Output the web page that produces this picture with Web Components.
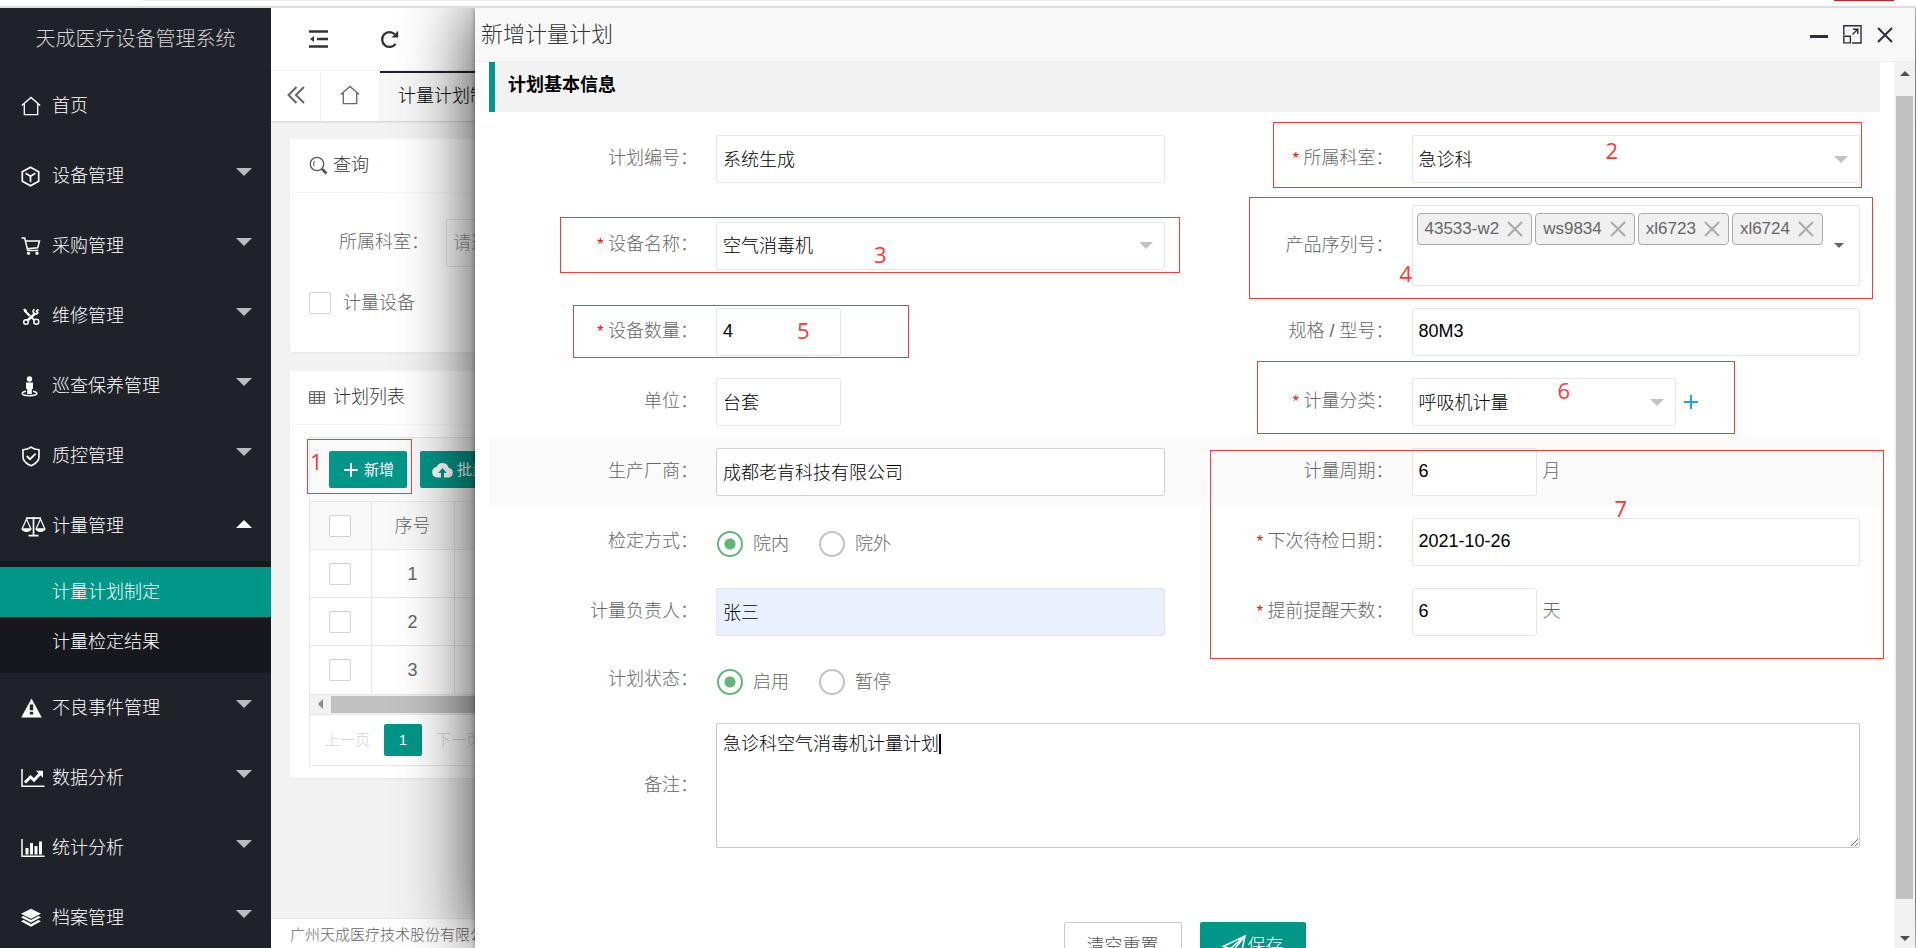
<!DOCTYPE html>
<html lang="zh-CN">
<head>
<meta charset="utf-8">
<title>天成医疗设备管理系统</title>
<style>
  html, body { margin: 0; height: 100%; overflow: hidden; }
  body { font: 300 18px/24px "Liberation Sans", "Noto Sans CJK SC", sans-serif; color: #333; background: #fff; }
</style>
</head>
<body>
<app-shell>
  <side-nav slot="side">
    <nav-item icon="home" label="首页"></nav-item>
    <nav-item icon="cube" label="设备管理" group></nav-item>
    <nav-item icon="cart" label="采购管理" group></nav-item>
    <nav-item icon="tools" label="维修管理" group></nav-item>
    <nav-item icon="patrol" label="巡查保养管理" group></nav-item>
    <nav-item icon="shield" label="质控管理" group></nav-item>
    <nav-item icon="scale" label="计量管理" group open>
      <nav-link label="计量计划制定" active></nav-link>
      <nav-link label="计量检定结果"></nav-link>
    </nav-item>
    <nav-item icon="warn" label="不良事件管理" group></nav-item>
    <nav-item icon="trend" label="数据分析" group></nav-item>
    <nav-item icon="bars" label="统计分析" group></nav-item>
    <nav-item icon="layers" label="档案管理" group></nav-item>
  </side-nav>
  <top-bar slot="main"></top-bar>
  <tab-bar slot="main"></tab-bar>
  <page-content slot="main">
    <ui-card icon="search" heading="查询"><query-form></query-form></ui-card>
    <ui-card icon="grid" heading="计划列表"><plan-list></plan-list></ui-card>
  </page-content>
  <page-footer slot="main"></page-footer>
  <ui-dialog slot="dialog" heading="新增计量计划">
    <section-title>计划基本信息</section-title>
    <form-row>
      <text-field label="计划编号" value="系统生成"></text-field>
      <select-field label="所属科室" value="急诊科" required>
        <step-note style="left:88px;right:18px;top:-2px;bottom:6px;--nx:332px;--ny:16px">2</step-note>
      </select-field>
    </form-row>
    <form-row>
      <select-field label="设备名称" value="空气消毒机" required>
        <step-note style="left:71px;right:5px;top:23px;bottom:24px;--nx:313px;--ny:25px">3</step-note>
      </select-field>
      <tag-field label="产品序列号" tags="43533-w2,ws9834,xl6723,xl6724">
        <step-note style="left:64px;right:7px;top:3px;bottom:-2px;--nx:150px;--ny:64px">4</step-note>
      </tag-field>
    </form-row>
    <form-row>
      <text-field label="设备数量" value="4" size="short" required>
        <step-note style="left:84px;width:336px;top:8px;bottom:9px;--nx:223px;--ny:13px">5</step-note>
      </text-field>
      <text-field label="规格 / 型号" value="80M3"></text-field>
    </form-row>
    <form-row>
      <text-field label="单位" value="台套" size="short"></text-field>
      <select-field label="计量分类" value="呼吸机计量" size="medium" add required>
        <step-note style="left:72px;width:478px;top:-6px;bottom:3px;--nx:300px;--ny:17px">6</step-note>
      </select-field>
    </form-row>
    <form-row hover>
      <text-field label="生产厂商" value="成都老肯科技有限公司" strong></text-field>
      <text-field label="计量周期" value="6" size="short" unit="月">
        <step-note style="left:25px;right:-4px;top:13px;height:209px;--nx:404px;--ny:46px">7</step-note>
      </text-field>
    </form-row>
    <form-row>
      <radio-field label="检定方式" options="院内,院外"></radio-field>
      <text-field label="下次待检日期" value="2021-10-26" required></text-field>
    </form-row>
    <form-row>
      <text-field label="计量负责人" value="张三" filled></text-field>
      <text-field label="提前提醒天数" value="6" size="short" unit="天" required></text-field>
    </form-row>
    <form-row compact>
      <radio-field label="计划状态" options="启用,暂停"></radio-field>
    </form-row>
    <area-field label="备注" value="急诊科空气消毒机计量计划"></area-field>
    <form-actions></form-actions>
  </ui-dialog>
</app-shell>

<script>
const define = (name, css, html) => customElements.define(name, class extends HTMLElement {
  connectedCallback() {
    if (this.shadowRoot) return;
    const root = this.attachShadow({ mode: 'open' });
    const body = typeof html === 'function' ? html(this) : html;
    root.innerHTML = `<style>*{box-sizing:border-box}button,input,select,textarea{font:inherit;color:inherit;margin:0}${css}</style>${body}`;
  }
});

const line = (d, w = 1.5, extra = '') => `<path d="${d}" fill="none" stroke="currentColor" stroke-width="${w}" ${extra}/>`;
const fill = (d, extra = '') => `<path d="${d}" fill="currentColor" ${extra}/>`;
/* name: [width, height, shapes] */
const ICONS = {
  home: [20, 20, line('M.8 9.6 10 1.4l9.200 8.200M3.300 8v10.600h13.400V8', 1.3)],
  cube: [19, 21, line('M9.500 1.200 17.700 5.700v9.600l-8.200 4.500-8.200-4.500V5.700zM4.600 7.300l4.900 3 4.900-3M9.500 10.300v6', 1.7)],
  cart: [20, 20, line('M.5 2h3.200l3 12.500h10.600M4.800 5h13.700l-1.800 6.800-10.600 1', 1.5) + '<circle cx="7.500" cy="17.300" r="1.600" fill="currentColor"/><circle cx="16" cy="17.300" r="1.600" fill="currentColor"/>'],
  tools: [20, 20, line('M3.500 4.500 9 10', 2.2) + line('M14 7.500 6 15', 2.6) + line('M13.500 3.200c-2 1-1.600 3.300-.3 4.300s3.200.6 4-1.300', 1.7) + '<circle cx="5" cy="16" r="2.300" fill="none" stroke="currentColor" stroke-width="1.500"/><circle cx="15.300" cy="15.800" r="2.500" fill="none" stroke="currentColor" stroke-width="1.500"/>' + line('M10.500 11.500 13.500 14.200M15 6l2.500-2.500', 1.8) + fill('M2 3.500 4 2.500l2 2-1.500 2z')],
  patrol: [17, 21, '<circle cx="8.500" cy="3" r="2.700" fill="currentColor"/>' + fill('M5 6.500h7v6l-1.200 1V18H6.200v-4.500L5 12.500z') + line('M5 15.200c-6 1.200-5 4.600 3.500 4.600s9.500-3.400 3.500-4.600', 1.5)],
  shield: [20, 21, line('M10 1.200c2.500 1.900 5 2.500 8 2.600v7.300c0 4.300-3.500 6.900-8 8.700-4.500-1.800-8-4.400-8-8.700V3.800c3-.1 5.500-.7 8-2.600z', 1.6) + line('m5.800 10 3.200 3.200 5.600-5.600', 1.8)],
  scale: [25, 21, line('M5 2.200h15M12.500 1v18M7.500 19.600h10', 1.7) + line('M5.500 3 1.300 12.500M5.500 3l4.200 9.500M19.500 3l-4.200 9.500M19.500 3l4.200 9.500', 1.2) + fill('M.3 12.300h10.400c-.4 5-10 5-10.400 0zM14.300 12.300h10.400c-.4 5-10 5-10.400 0z')],
  warn: [21, 20, fill('M10.500.5 20.800 19.500H.2zM8.800 6.500v5.700h3.400V6.500zM8.800 13.700v2.800h3.400v-2.800z', 'fill-rule="evenodd"')],
  trend: [24, 20, line('M1 1v17.200h22.500', 1.5) + line('M4 14.500 9.500 9l3.500 3.200 6.500-7', 3) + fill('M15 2.700h7v7z')],
  bars: [24, 20, line('M1 1v17.200h22.500', 1.5) + fill('M4.500 10h3v6.500h-3zM9 5h3v11.500H9zM13.500 8h3v8.500h-3zM18 3.500h3v13h-3z')],
  layers: [20, 20, fill('M10 .8 20 5.800l-10 5-10-5z') + fill('M0 9.200 2.500 8 10 11.900 17.500 8 20 9.200l-10 5.200zM0 13.300l2.500-1.200L10 16l7.500-3.900L20 13.300l-10 5.500z')],
  fold: [19, 18, line('M0 1.500h19M8 9h11M0 16.500h19', 2.4) + fill('M1 9l4-3v6z')],
  refresh: [19, 19, line('M15.600 13.800A7.400 7.400 0 1 1 14.800 4.300', 2.3) + fill('M11.500 7.500h6.700V.8z')],
  rewind: [18, 18, line('M9.500 1 1.500 9l8 8M17 1 9 9l8 8', 2)],
  search: [19, 19, '<circle cx="8" cy="8" r="6.700" fill="none" stroke="currentColor" stroke-width="1.300"/>' + line('M5.600 5a4.500 4.500 0 0 0-.6 5', 1) + line('m13 13 4.500 4.500', 2.6)],
  grid: [16, 13, line('M.7.7h14.600v11.600H.7zM.7 3.600h14.600M.7 6.500h14.600M.7 9.400h14.600M5.300.7v11.600M10.300.7v11.600', 1)],
  plus: [14, 14, line('M7 0v14M0 7h14', 2)],
  cloud: [21, 16, fill('M16.800 6A6.500 6.500 0 0 0 4.500 5 5.300 5.300 0 0 0 5.300 15.500H9V11H6.300L10.500 6l4.200 5H12v4.500h4.600A4.800 4.800 0 0 0 16.800 6z')],
  min: [18, 18, fill('M0 9h18v3H0z')],
  max: [19, 19, line('M.8 10V.8h17.200V18H9M.8 11.300h6.600v6.600H.8zM9.500 9.500 14.500 4.500M10 4.200h4.800V9', 1.4)],
  close: [16, 16, line('m1 1 14 14M15 1 1 15', 2)],
  plane: [24, 22, line('M1 11.500 23 1l-4 19-7-5.500-3.500 6v-7L1 11.500zM8.500 13.500 23 1 12 14.500', 1.5)]
};
define('ui-icon', ':host{display:inline-flex;flex:none}svg{display:block}', el => {
  const [w, h, s] = ICONS[el.getAttribute('name')];
  return `<svg width="${w}" height="${h}" viewBox="0 0 ${w} ${h}" aria-hidden="true">${s}</svg>`;
});

/* ---------- frame ---------- */
define('app-shell', `
  :host{display:flex;flex-direction:column;height:100vh}
  .strip{display:flex;flex:none;height:8px;border-bottom:2px solid #dcdde2;background:#fff}
  .strip i{height:1px;margin-left:143px;flex:1;background:#eee}
  .strip b{width:60px;height:1px;margin:0 22px 0 114px;background:#c5221f}
  .body{position:relative;display:flex;flex:1;min-height:0;overflow:hidden}
  main{display:flex;flex:1;flex-direction:column;min-width:0;overflow:hidden;background:#f2f2f2}
  ::slotted([slot=dialog]){position:absolute;left:475px;right:1px;top:0;bottom:0}`,
  `<div class="strip"><i></i><b></b></div>
   <div class="body"><slot name="side"></slot><main><slot name="main"></slot></main><slot name="dialog"></slot></div>`);

/* ---------- side menu ---------- */
define('side-nav', `
  :host{display:block;flex:none;width:271px;background:#20222a;color:#fff;overflow:hidden}
  header{display:flex;align-items:center;justify-content:center;height:62px;margin-bottom:1px;font-size:20px;color:#d2d3d4;box-shadow:0 1px 2px rgba(0,0,0,.15)}
  nav{display:block}`,
  `<header><span>天成医疗设备管理系统</span></header><nav><slot></slot></nav>`);
define('nav-item', `
  :host{display:block}
  a{display:flex;align-items:center;height:70px;padding:0 19px 0 21px;color:#fff;text-decoration:none}
  .ic{display:flex;width:31px;flex:none}
  .tx{flex:1}
  .ar{border:8px solid transparent;border-top-color:#bcbdbf;border-bottom-width:0;margin-bottom:9px}
  .ar.up{border-width:0 8px 8px;border-bottom-color:#fff;margin-bottom:5px}
  .sub{padding:6px 0;background:#17181e}`,
  el => `<a href="#"><span class="ic"><ui-icon name="${el.getAttribute('icon')}"></ui-icon></span><span class="tx">${el.getAttribute('label')}</span>${
    el.hasAttribute('group') ? `<span class="ar ${el.hasAttribute('open') ? 'up' : ''}"></span>` : ''}</a>${
    el.hasAttribute('open') ? '<div class="sub"><slot></slot></div>' : ''}`);
define('nav-link', `
  :host{display:block}:host([active]){background:#009688}
  a{display:block;padding-left:52px;line-height:50px;color:#fff;text-decoration:none}`,
  el => `<a href="#">${el.getAttribute('label')}</a>`);

/* ---------- main column ---------- */
define('top-bar', `
  :host{display:flex;flex:none;align-items:center;gap:52px;height:63px;padding-left:38px;background:#fff;border-bottom:1px solid #f2f2f2;box-sizing:border-box}
  button{display:flex;padding:0;border:0;background:none;color:#333}`,
  `<button aria-label="收起菜单"><ui-icon name="fold"></ui-icon></button><button aria-label="刷新"><ui-icon name="refresh"></ui-icon></button>`);
define('tab-bar', `
  :host{display:flex;flex:none;height:50px;background:#fff;box-shadow:0 1px 2px rgba(0,0,0,.15)}
  a{display:flex;align-items:center;justify-content:center;padding-bottom:2px;color:#666;text-decoration:none;border-right:1px solid #f2f2f2}
  .a{width:50px}.b{width:59px}
  .c{padding:0 50px 2px 18px;background:#f6f6f6;color:#000;border-top:2px solid #20222a}`,
  `<a class="a" href="#" aria-label="向左滚动"><ui-icon name="rewind"></ui-icon></a><a class="b" href="#" aria-label="首页"><ui-icon name="home"></ui-icon></a><a class="c" href="#">计量计划制定</a>`);
define('page-content', ':host{display:flex;flex-direction:column;flex:1;gap:19px;padding:18px 19px;min-height:0;overflow:hidden}', '<slot></slot>');
define('ui-card', `
  :host{display:block;flex:none;background:#fff;border-radius:2px;box-shadow:0 1px 2px rgba(0,0,0,.05)}
  header{display:flex;align-items:center;height:54px;padding:0 19px 1px;border-bottom:1px solid #f6f6f6}
  .ic{display:flex;width:24px;color:#555}
  h2{margin:0;font-size:18px;font-weight:inherit}`,
  el => `<header><span class="ic"><ui-icon name="${el.getAttribute('icon')}"></ui-icon></span><h2>${el.getAttribute('heading')}</h2></header><slot></slot>`);
const CHECK = 'input[type=checkbox]{appearance:none;display:block;flex:none;width:22px;height:22px;background:#fff;border:1px solid #d2d2d2;border-radius:2px}';
define('query-form', `
  :host{display:block;padding:26px 19px 37px;color:#666}
  .row{display:flex;align-items:center;height:48px}
  .row label{width:137px;padding:0 0 2px 30px}
  select{appearance:none;width:300px;height:48px;padding:0 6px;border:1px solid #e6e6e6;border-radius:2px;background:#fff;color:#999}
  .chk{display:flex;align-items:center;gap:12px;margin-top:24px}${CHECK}`,
  `<div class="row"><label for="d">所属科室：</label><select id="d"><option>请选择科室</option></select></div>
   <div class="chk"><input type="checkbox" id="k"><label for="k">计量设备</label></div>`);
define('plan-list', `
  :host{display:block;padding:12px 19px}
  .box{border:1px solid #e6e6e6;overflow:hidden;color:#666}
  .tools{display:flex;gap:13px;padding:13px 19px;background:#fafafa}
  .tools button{display:flex;align-items:center;flex:none;gap:6px;height:37px;padding:0 13px 0 15px;border:0;border-radius:2px;background:#009688;color:#fff;font-size:15px;font-weight:400}
  .tools button+button{gap:4px;padding-left:12px}
  table{width:1500px;border-collapse:collapse;table-layout:fixed}
  th,td{height:48px;padding:0;border:1px solid #e6e6e6;border-left:0;font-weight:inherit;text-align:center}
  tr:last-child td{border-bottom:0}
  th{background:#f8f8f8}th:nth-child(1){width:61px}th:nth-child(2){width:83px}
  td input,th input{margin:0 19px}
  .scroll{display:flex;align-items:center;height:21px;padding:1px 0;background:#f1f1f1;border-top:1px solid #e6e6e6;border-bottom:1px solid #e6e6e6}
  .scroll i{border:5px solid transparent;border-left:0;border-right-color:#8a8a8a;margin:0 8px}
  .scroll b{flex:1;height:17px;background:#c1c1c1}
  .page{display:flex;align-items:center;height:50px;padding-left:15px;font-size:15px;gap:14px}
  .page button{height:32px;padding:0;border:0;background:none;color:#d2d2d2}
  .page .on{width:38px;background:#009688;color:#fff;border-radius:2px}
  .wrap{position:relative}${CHECK}`,
  `<div class="wrap"><div class="box"><div class="tools"><button><ui-icon name="plus"></ui-icon>新增</button><button><ui-icon name="cloud"></ui-icon>批量导入</button></div>
   <table><thead><tr><th><input type="checkbox" aria-label="全选"></th><th>序号</th><th></th></tr></thead>
   <tbody>${[1, 2, 3].map(n => `<tr><td><input type="checkbox" aria-label="选择${n}"></td><td>${n}</td><td></td></tr>`).join('')}</tbody></table>
   <div class="scroll"><i></i><b></b></div>
   <div class="page"><button>上一页</button><button class="on">1</button><button>下一页</button></div></div>
   <step-note style="left:-2px;width:105px;top:2px;height:55px;--nx:2px;--ny:10px">1</step-note></div>`);
define('page-footer', ':host{display:block;flex:none;height:30px;box-sizing:border-box;padding-left:19px;background:#fff;border-top:1px solid #e8e8e8;font-size:15px;line-height:32px;color:#666;overflow:hidden}', '广州天成医疗技术股份有限公司');

/* ---------- dialog ---------- */
define('ui-dialog', `
  :host{display:flex;flex-direction:column;background:#fff;border-radius:2px 2px 0 0;box-shadow:0 0 4px rgba(0,0,0,.4),0 0 72px rgba(0,0,0,.8)}
  header{display:flex;align-items:center;flex:none;height:54px;padding:0 22px 0 6px;background:#f8f8f8;border-bottom:1px solid #eee}
  h1{flex:1;margin:0;font-size:22px;font-weight:inherit;color:#333}
  .btns{display:flex;align-items:center;gap:15px;color:#2e2d3c}
  .btns button{display:flex;padding:0;border:0;background:none}
  .wrap{display:flex;flex:1;min-height:0}
  form{flex:1;min-width:0;padding:0 14px;overflow:hidden}
  .bar{display:flex;flex-direction:column;align-items:center;flex:none;width:21px;background:#f1f1f1}
  .bar i{border:5px solid transparent;border-top:0;border-bottom-color:#505050;margin:9px 0 20px}
  .bar b{flex:1;width:17px;background:#c1c1c1}
  .bar i:last-child{border:5px solid transparent;border-bottom:0;border-top-color:#505050;margin:37px 0 7px}`,
  el => `<header><h1>${el.getAttribute('heading')}</h1><div class="btns"><button aria-label="最小化"><ui-icon name="min"></ui-icon></button><button aria-label="最大化"><ui-icon name="max"></ui-icon></button><button aria-label="关闭"><ui-icon name="close"></ui-icon></button></div></header>
   <div class="wrap"><form><slot></slot></form><div class="bar"><i></i><b></b><i></i></div></div>`);
define('section-title', ':host{display:block;height:50px;margin-bottom:12px;padding-left:13px;border-left:6px solid #009688;border-radius:0 2px 2px 0;background:#f2f2f2;line-height:46px;font-weight:bold;color:#000}', '<slot></slot>');
define('form-row', `
  :host{display:grid;grid-template-columns:1fr 1fr;min-height:70px}
  :host([hover]){background:#fafafa}
  :host([compact]){min-height:65px}`, '<slot></slot>');
define('step-note', `
  :host{position:absolute;border:1px solid #f93a3a;pointer-events:none;z-index:2;box-sizing:border-box}
  span{position:absolute;left:var(--nx);top:var(--ny);font:22px/22px "Open Sans","Noto Sans",sans-serif;color:#ff3636}`, '<span><slot></slot></span>');

const FIELD = `
  :host{position:relative;display:flex;align-items:center;padding:11px 20px 11px 0;color:#666}
  .lb{flex:none;width:227px;padding-right:18px;padding-bottom:2px;text-align:right;white-space:pre}
  .lb em{font-style:normal;color:red;font-size:16px}
  input,select,textarea,.tags{border:1px solid #e6e6e6;border-radius:2px;background:#fff;color:#000;outline:0}
  input,select{width:100%;min-width:0;height:48px;padding:0 6px}
  .ctl{position:relative;flex:1;display:flex;align-items:center;min-width:0}
  :host([size=short]) .ctl{flex:0 0 125px}
  :host([size=medium]) .ctl{flex:0 0 264px}
  :host([strong]) input{border-color:#d2d2d2}
  :host([filled]) input{background:#e8f0fe}`;
const label = (el, tag = 'label') => `<${tag} class="lb" id="l" ${tag === 'label' ? 'for="c"' : ''}>${el.hasAttribute('required') ? '<em>* </em>' : ''}${el.getAttribute('label')}：</${tag}>`;
const val = el => el.getAttribute('value');
define('text-field', FIELD + 'input{padding-bottom:2px}.unit{margin-left:6px;padding-bottom:2px}',
  el => `${label(el)}<div class="ctl"><input id="c" type="text" value="${val(el)}"></div>${el.hasAttribute('unit') ? `<span class="unit">${el.getAttribute('unit')}</span>` : ''}<slot></slot>`);
define('select-field', FIELD + `
  select{appearance:none;padding-top:1px}
  .ar{position:absolute;right:12px;border:7px solid transparent;border-top-color:#c2c2c2;border-bottom:0;pointer-events:none}
  .add{display:flex;margin-left:8px;padding:0;border:0;background:none;color:#1e9fff}`,
  el => `${label(el)}<div class="ctl"><select id="c"><option>${val(el)}</option></select><span class="ar"></span></div>${el.hasAttribute('add') ? '<button type="button" class="add" aria-label="添加分类"><ui-icon name="plus"></ui-icon></button>' : ''}<slot></slot>`);
define('tag-field', FIELD + `
  .tags{display:flex;align-items:flex-start;flex:1;gap:3px;height:81px;padding:7px 4px;font-size:17px}
  .tag{display:flex;align-items:center;gap:8px;height:32px;padding:0 8px 0 7px;border:1px solid #aaa;border-radius:4px;background:#f0f0f0;color:#666}
  .tag button{display:flex;padding:0;border:0;background:none;color:#aaa}
  .ar{position:absolute;right:16px;border:5px solid transparent;border-top-color:#666;border-bottom:0}`,
  el => `${label(el, 'span')}<div class="ctl" role="group" aria-labelledby="l"><div class="tags">${el.getAttribute('tags').split(',').map(t => `<span class="tag">${t}<button type="button" aria-label="移除 ${t}"><ui-icon name="close"></ui-icon></button></span>`).join('')}</div><span class="ar"></span></div><slot></slot>`);
define('radio-field', FIELD + `
  .ctl{gap:29px;padding-top:4px}
  .ctl label{display:flex;align-items:center;gap:10px;padding-left:1px;line-height:28px}
  .ctl input{appearance:none;flex:none;width:26px;height:26px;padding:0;border:2px solid #c2c2c2;border-radius:50%}
  .ctl input:checked{border-color:#5fb878;background:radial-gradient(circle,#5fb878 5px,transparent 6px)}`,
  el => `${label(el, 'span')}<div class="ctl" role="radiogroup" aria-labelledby="l">${el.getAttribute('options').split(',').map((o, i) => `<label><input type="radio" name="r" ${i ? '' : 'checked'}>${o}</label>`).join('')}</div>`);
define('area-field', FIELD + `
  textarea{width:100%;height:125px;padding:8px 6px;border-color:#c9c9c9;resize:vertical;line-height:24px;display:block}
  .caret{position:absolute;left:223px;top:11px;width:2px;height:20px;background:#000}`,
  el => `${label(el)}<div class="ctl"><textarea id="c">${val(el)}</textarea><span class="caret"></span></div>`);
define('form-actions', `
  :host{display:flex;justify-content:center;gap:18px;padding:63px 0 40px}
  button{display:flex;align-items:center;gap:2px;height:48px;padding:0 22px;border:1px solid #c9c9c9;border-radius:2px;background:#fff;color:#555}
  .ok{border:0;background:#009688;color:#fff}`,
  `<button type="reset">清空重置</button><button type="submit" class="ok"><ui-icon name="plane"></ui-icon>保存</button>`);
</script>
</body>
</html>
